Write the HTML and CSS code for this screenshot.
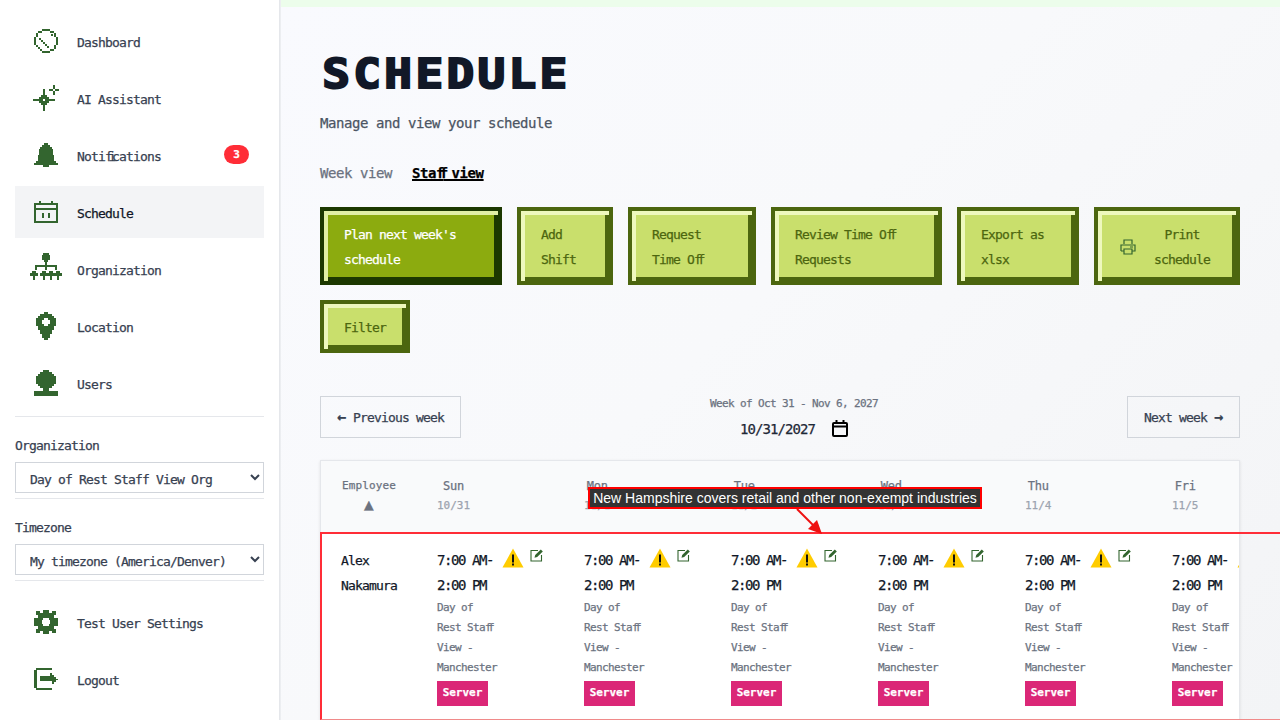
FILE: index.html
```html
<!DOCTYPE html>
<html lang="en">
<head>
    <meta charset="UTF-8">
    <title>Schedule</title>
    <link rel="stylesheet" href="styles.css">
</head>
<body>
    <svg class="sprites" width="0" height="0">
        <symbol id="i-warn" viewBox="0 0 22 20"><path d="M11 .5 L21.500 19.500 H.5 Z" fill="#ffcc00"/><rect x="10" y="6.500" width="2" height="8" fill="#111"/><rect x="10" y="15.500" width="2" height="2" fill="#111"/></symbol>
        <symbol id="i-edit" viewBox="0 0 14 14"><path d="M8 2.500H1v10.500h10.500V7" fill="none" stroke="#33652f" stroke-width="1.100"/><path d="M4.500 9.800l.7-2.700L10.800 1.500l2 2-5.600 5.600z" fill="#33652f"/></symbol>
    </svg>

    <aside class="sidebar">
        <nav class="nav">
            <a class="nav-item"><span class="nav-icon"><svg width="24" height="24" viewBox="0 0 24 24" fill="#33652f"><path d="M8 0h8v2h4v2h2v4h2v8h-2v4h-2v2h-4v2H8v-2H6v-2H4v-2H2v-2H0V8h2V4h2V2h4zM8 2v2H4v4H2v8h2v2h2v2h2v2h8v-2h4v-4h2V8h-2V4h-4V2z" fill-rule="evenodd"/><path d="M5 9h2v2h2v2h2v2h2v2h2v2h-2v-2h-2v-2H9v-2H7v-2H5zM17 5h2v2h-2z"/></svg></span>Dashboard</a>
            <a class="nav-item"><span class="nav-icon"><svg width="26" height="26" viewBox="0 0 26 26" fill="#33652f"><path d="M10 4h2v22h-2zM0 14h22v2H0zM8 10h6v10H8zM6 12h10v6H6zM20 0h2v10h-2zM16 4h10v2H16z"/><path d="M10 14h2v2h-2zM20 4h2v2h-2z" fill="#fff"/></svg></span>AI Assistant</a>
            <a class="nav-item"><span class="nav-icon"><svg width="24" height="24" viewBox="0 0 24 24" fill="#33652f"><path d="M10 0h4v2h2v2h2v2h1v6h1v6h2v2h2v2H0v-2h2v-2h2v-6h1V6h1V4h2V2h2zM9 22h6v2H9z"/></svg></span>Noti<span class="lig">fi</span>cations<span class="badge">3</span></a>
            <a class="nav-item active"><span class="nav-icon"><svg width="24" height="22" viewBox="0 0 24 22" fill="#33652f"><path d="M5 0h2v2h10V0h2v2h5v20H0V2h5zM2 4v3h20V4zM2 9v11h20V9zM8 12h2v5H8zM14 12h2v5h-2z" fill-rule="evenodd"/></svg></span>Schedule</a>
            <a class="nav-item"><span class="nav-icon"><svg width="32" height="32" viewBox="0 0 32 32" fill="#33652f"><path d="M13 0h6v2h1v5h-2v2h-1v3h10v5h-2v-3h-8v3h-2v-3H7v3H5v-5h10V9h-1V7h-2V2h1z"/><path d="M2 18h4v2h2v3H5v4H3v-4H0v-3h2z"/><path d="M12 18h4v2h2v3h-3v4h-2v-4h-3v-3h2z"/><path d="M19 18h4v2h2v3h-3v4h-2v-4h-3v-3h2z"/><path d="M26 18h4v2h2v3h-3v4h-2v-4h-3v-3h2z"/></svg></span>Organization</a>
            <a class="nav-item"><span class="nav-icon"><svg width="20" height="28" viewBox="0 0 20 28" fill="#33652f"><path d="M8 0h4v2h4v2h2v2h2v8h-2v4h-2v4h-2v4h-2v2H8v-2H6v-4H4v-4H2v-4H0V6h2V4h2V2h4zM8 6v2H6v4h2v2h4v-2h2V8h-2V6z" fill-rule="evenodd"/></svg></span>Location</a>
            <a class="nav-item"><span class="nav-icon"><svg width="24" height="26" viewBox="0 0 24 26" fill="#33652f"><path d="M9 0h6v2h3v2h2v2h2v8h-2v2h-2v2h-3v3h9v5H0v-5h9v-3H6v-2H4v-2H2V6h2V4h2V2h3z"/></svg></span>Users</a>
        </nav>
        <div class="picker">
            <label class="picker-label">Organization</label>
            <select class="picker-select"><option>Day of Rest Staff View Org</option></select>
        </div>
        <div class="picker">
            <label class="picker-label">Timezone</label>
            <select class="picker-select"><option>My timezone (America/Denver)</option></select>
        </div>
        <nav class="nav nav-bottom">
            <a class="nav-item"><span class="nav-icon"><svg width="24" height="24" viewBox="0 0 24 24" fill="#33652f"><path d="M9 0h6v3h3V1h4v4h-2v3h4v8h-4v3h2v4h-4v-2h-3v3H9v-3H6v2H2v-4h2v-3H0V8h4V5H2V1h4v2h3zM9 8v2H8v4h1v2h6v-2h1v-4h-1V8z" fill-rule="evenodd"/></svg></span>Test User Settings</a>
            <a class="nav-item"><span class="nav-icon"><svg width="24" height="22" viewBox="0 0 24 22" fill="#33652f"><path d="M2 0h16v2H3v18h15v2H2v-2H0V2h2z"/><path d="M6 8h10V5h2v2h2v2h2v2h2v1h-2v2h-2v2h-2v-3H6z"/></svg></span>Logout</a>
        </nav>
    </aside>

    <main class="main">
        <h1 class="title">SCHEDULE</h1>
        <p class="subtitle">Manage and view your schedule</p>
        <div class="tabs">
            <a class="tab">Week view</a>
            <a class="tab tab-on">Sta<span class="lig">ff</span> view</a>
        </div>
        <div class="actions">
            <button class="btn btn-dark w-plan">Plan next week's<br>schedule</button>
            <button class="btn w-add">Add<br>Shift</button>
            <button class="btn w-request">Request<br>Time O<span class="lig">ff</span></button>
            <button class="btn w-review">Review Time O<span class="lig">ff</span><br>Requests</button>
            <button class="btn w-export">Export as<br>xlsx</button>
            <button class="btn btn-print w-print">
                <svg width="16" height="16" viewBox="0 0 16 16" fill="none" stroke="#33652f" stroke-width="1.200"><path d="M4 5V1h8v4M1 12V6h14v6h-3M4 12H1M4 10h8v5H4zM10 8h3"/></svg>
                <span class="btn-center">Print<br>schedule</span>
            </button>
            <button class="btn btn-filter">Filter</button>
        </div>
        <div class="week-bar">
            <button class="week-btn"><span class="arrow">←</span> Previous week</button>
            <div class="week-mid">
                <div class="week-label">Week of Oct 31 - Nov 6, 2027</div>
                <div class="week-date">10/31/2027
                    <svg width="16" height="17" viewBox="0 0 16 17" fill="none" stroke="#000" stroke-width="2"><rect x="1" y="3" width="14" height="13" rx="1"/><path d="M1 6.500h14M4.500 0v3M11.500 0v3"/></svg>
                </div>
            </div>
            <button class="week-btn">Next week <span class="arrow">→</span></button>
        </div>

        <div class="table">
            <div class="thead">
                <div class="th th-emp">Employee<span class="sort">▲</span></div>
                <div class="th">Sun<span class="th-date">10/31</span></div>
                <div class="th">Mon<span class="th-date">11/1</span></div>
                <div class="th">Tue<span class="th-date">11/2</span></div>
                <div class="th">Wed<span class="th-date">11/3</span></div>
                <div class="th">Thu<span class="th-date">11/4</span></div>
                <div class="th">Fri<span class="th-date">11/5</span></div>
            </div>
            <div class="row">
                <div class="emp">Alex<br>Nakamura</div>
                <div class="cell"><div class="time">7:00 AM-<svg class="warn"><use href="#i-warn"/></svg><svg class="edit"><use href="#i-edit"/></svg><br>2:00 PM</div><div class="place">Day of<br>Rest Sta<span class="lig">ff</span><br>View -<br>Manchester</div><span class="role">Server</span></div>
                <div class="cell"><div class="time">7:00 AM-<svg class="warn"><use href="#i-warn"/></svg><svg class="edit"><use href="#i-edit"/></svg><br>2:00 PM</div><div class="place">Day of<br>Rest Sta<span class="lig">ff</span><br>View -<br>Manchester</div><span class="role">Server</span></div>
                <div class="cell"><div class="time">7:00 AM-<svg class="warn"><use href="#i-warn"/></svg><svg class="edit"><use href="#i-edit"/></svg><br>2:00 PM</div><div class="place">Day of<br>Rest Sta<span class="lig">ff</span><br>View -<br>Manchester</div><span class="role">Server</span></div>
                <div class="cell"><div class="time">7:00 AM-<svg class="warn"><use href="#i-warn"/></svg><svg class="edit"><use href="#i-edit"/></svg><br>2:00 PM</div><div class="place">Day of<br>Rest Sta<span class="lig">ff</span><br>View -<br>Manchester</div><span class="role">Server</span></div>
                <div class="cell"><div class="time">7:00 AM-<svg class="warn"><use href="#i-warn"/></svg><svg class="edit"><use href="#i-edit"/></svg><br>2:00 PM</div><div class="place">Day of<br>Rest Sta<span class="lig">ff</span><br>View -<br>Manchester</div><span class="role">Server</span></div>
                <div class="cell"><div class="time">7:00 AM-<svg class="warn"><use href="#i-warn"/></svg><svg class="edit"><use href="#i-edit"/></svg><br>2:00 PM</div><div class="place">Day of<br>Rest Sta<span class="lig">ff</span><br>View -<br>Manchester</div><span class="role">Server</span></div>
            </div>
        </div>

        <!-- the highlight lies over the table, as in the capture -->
        <div class="hl-box"></div>
        <div class="hl-note">New Hampshire covers retail and other non-exempt industries</div>
        <svg class="hl-arrow" width="30" height="28" viewBox="0 0 30 28"><path d="M2 1 L20 19" stroke="#ee1111" stroke-width="2"/><path d="M27 26 L13 21 L22 12 Z" fill="#ee1111"/></svg>
    </main>
</body>
</html>
```

FILE: styles.css
```css
* {
    margin: 0;
    padding: 0;
    box-sizing: border-box;
}

html, body {
    height: 720px;
    overflow: hidden;
}

body {
    display: flex;
    font-family: "DejaVu Sans Mono", monospace;
    font-size: 12px;
    color: #374151;
    background: #fff;
    -webkit-text-stroke: .25px;
}

.sprites {
    position: absolute;
}

/* squeezed pair, the original font draws ff and fi in one cell */
.lig {
    letter-spacing: -.33em;
}

/* Sidebar */
.sidebar {
    position: relative;
    z-index: 1;
    width: 280px;
    flex: none;
    height: 720px;
    padding: 15px 15px 0 15px;
    background: #fff;
    border-right: 1px solid #e5e7eb;
    box-shadow: 1px 0 0 #eceef1;
    overflow: hidden;
}

.nav-item {
    display: flex;
    align-items: center;
    height: 52px;
    margin-bottom: 5px;
    padding: 2px 15px 0;
    font-size: 13px;
    letter-spacing: -.83px;
    color: #374151;
}

.nav-icon {
    width: 32px;
    height: 32px;
    flex: none;
    margin: -2px 15px 0 0;
    display: flex;
    align-items: center;
    justify-content: center;
}

.active {
    background: #f3f4f6;
    color: #111827;
}

.badge {
    margin: -3px 0 0 auto;
    width: 25px;
    height: 19px;
    border-radius: 10px;
    background: #ff2d37;
    color: #fff;
    font-size: 11px;
    font-weight: bold;
    letter-spacing: 0;
    line-height: 19px;
    text-align: center;
}

.nav {
    margin-bottom: 7px;
}

.picker {
    height: 82px;
    padding-top: 20px;
    border-top: 1px solid #e5e7eb;
}

.picker-label {
    display: block;
    font-size: 13px;
    letter-spacing: -.83px;
    line-height: 18px;
    margin-bottom: 7px;
}

.picker-select {
    width: 100%;
    height: 31px;
    padding: 3px 0 0 10px;
    border: 1px solid #d1d5db;
    border-radius: 0;
    background: #fff;
    font-family: inherit;
    font-size: 13px;
    letter-spacing: -.83px;
    color: #374151;
    -webkit-text-stroke: .25px;
}

.nav-bottom {
    border-top: 1px solid #e5e7eb;
    padding-top: 15px;
}

/* Main column */
.main {
    flex: 1;
    position: relative;
    height: 720px;
    padding: 47px 40px 0;
    overflow: hidden;
    background:
        linear-gradient(#ecfdeb, #ecfdeb) top / 100% 7px no-repeat,
        linear-gradient(135deg, #f9fafe 0, #f8f9fb 45%, #f3f4f6 100%);
}

.title {
    padding-left: 2px;
    font-size: 40px;
    line-height: 54px;
    font-weight: bold;
    color: #111827;
    letter-spacing: 2.9px;
    -webkit-text-stroke: 2px #111827;
    transform: scaleX(1.15);
    transform-origin: left;
}

.subtitle {
    margin-top: 9px;
    font-size: 14px;
    line-height: 26px;
    letter-spacing: -.43px;
    color: #4b5563;
}

.tabs {
    display: flex;
    gap: 20px;
    margin-top: 24px;
    font-size: 14px;
    letter-spacing: -.43px;
    line-height: 26px;
}

.tab {
    color: #6b7280;
}

.tab-on {
    color: #000;
    font-weight: bold;
    text-decoration: underline;
    text-decoration-thickness: 2px;
}

.actions {
    display: flex;
    flex-wrap: wrap;
    gap: 15px;
    margin-top: 21px;
}

.btn {
    position: relative;
    height: 78px;
    padding: 2px 0 0 24px;
    border: 0;
    background: #c9df6c;
    box-shadow: inset 0 0 0 4px #4c660f, inset 8px 8px 0 0 #eef8bd, inset -8px -8px 0 0 #4c660f;
    font-family: inherit;
    font-size: 13px;
    letter-spacing: -.83px;
    line-height: 25px;
    color: #4c660f;
    text-align: left;
    white-space: nowrap;
    -webkit-text-stroke: .25px;
}

.btn-dark {
    background: #8cab0f;
    color: #fff;
    box-shadow: inset 0 0 0 4px #1c3800, inset 8px 8px 0 0 #e1efa5, inset -8px -8px 0 0 #1c3800;
}

.w-plan { width: 182px; }
.w-add { width: 96px; }
.w-request { width: 128px; }
.w-review { width: 171px; }
.w-export { width: 122px; }
.w-print { width: 146px; }

.btn-print {
    display: flex;
    align-items: center;
    gap: 18px;
    padding-left: 26px;
}

.btn-center {
    text-align: center;
}

.btn-filter {
    width: 90px;
    height: 53px;
}

.week-bar {
    display: flex;
    justify-content: space-between;
    align-items: flex-start;
    margin-top: 43px;
}

.week-btn {
    height: 42px;
    padding: 0 16px;
    border: 1px solid #d1d5db;
    background: transparent;
    font-family: inherit;
    font-size: 13px;
    letter-spacing: -.83px;
    color: #374151;
    white-space: nowrap;
    -webkit-text-stroke: .25px;
}

.arrow {
    display: inline-block;
    width: 9px;
    font-size: 15px;
    line-height: 12px;
    font-weight: bold;
    letter-spacing: 0;
}

.week-mid {
    text-align: center;
}

.week-label {
    font-size: 11px;
    letter-spacing: -.62px;
    line-height: 16px;
    color: #6b7280;
}

.week-date {
    display: flex;
    align-items: center;
    justify-content: center;
    gap: 17px;
    margin-top: 8px;
    font-size: 14px;
    letter-spacing: -.93px;
    color: #1f2937;
}

.table {
    margin-top: 22px;
    width: 920px;
    height: 300px;
    background: #fff;
    border: 1px solid #e5e7eb;
    box-shadow: 0 1px 3px rgba(0, 0, 0, .1);
    overflow: hidden;
}

.thead, .row {
    display: grid;
    grid-template-columns: 116px repeat(6, 147px);
}

.thead {
    height: 71px;
    background: #f9fafb;
    padding-top: 18px;
}

.th {
    justify-self: start;
    font-size: 12px;
    letter-spacing: -.22px;
    line-height: 14px;
    color: #6b7280;
    text-align: center;
}

.th-emp {
    justify-self: stretch;
    padding-right: 20px;
    font-size: 11px;
    letter-spacing: .13px;
}

.th-date {
    display: block;
    margin-top: 6px;
    font-size: 11px;
    letter-spacing: 0;
    color: #9ca3af;
}

.sort {
    display: block;
    margin-top: 5px;
    font-size: 16px;
    color: #6b7280;
}

.row {
    padding-top: 15px;
    border-top: 1px solid #e5e7eb;
}

.emp {
    padding-left: 20px;
    font-size: 13px;
    letter-spacing: -.83px;
    line-height: 25px;
    font-weight: 500;
    color: #111827;
}

.time {
    font-size: 14px;
    letter-spacing: -1.43px;
    line-height: 25px;
    color: #111827;
    white-space: nowrap;
}

.warn {
    width: 22px;
    height: 20px;
    margin-left: 9px;
    vertical-align: -3px;
}

.edit {
    width: 14px;
    height: 14px;
    margin-left: 6px;
    vertical-align: 3px;
}

.place {
    font-size: 11px;
    letter-spacing: -.62px;
    line-height: 20px;
    color: #6b7280;
}

.role {
    display: inline-block;
    width: 51px;
    height: 25px;
    margin-top: 3px;
    background: #db2777;
    color: #fff;
    font-size: 11px;
    font-weight: bold;
    line-height: 24px;
    text-align: center;
}

/* Highlight */
.hl-box {
    position: absolute;
    left: 40px;
    top: 532px;
    width: 1000px;
    height: 188px;
    border: 2px solid #ff2d37;
    border-bottom: 1px solid #f08a8a;
    pointer-events: none;
}

.hl-note {
    position: absolute;
    left: 308px;
    top: 487px;
    width: 394px;
    height: 22px;
    border: 2px solid #f00;
    background: #333;
    color: #fff;
    font-family: "Liberation Sans", Arial, sans-serif;
    font-size: 14px;
    line-height: 18px;
    text-align: center;
    white-space: nowrap;
    -webkit-text-stroke: 0;
}

.hl-arrow {
    position: absolute;
    left: 515px;
    top: 508px;
}
```
